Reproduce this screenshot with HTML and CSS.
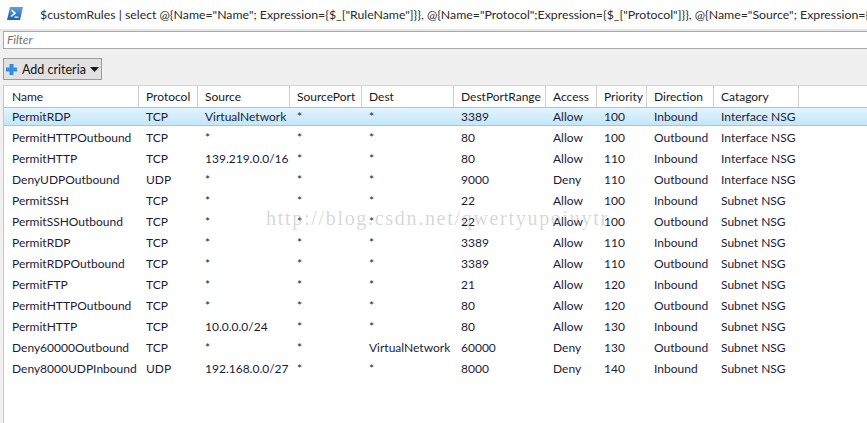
FILE: index.html
```html
<!DOCTYPE html>
<html>
<head>
<meta charset="utf-8">
<link rel="stylesheet" href="styles.css">
</head>
<body>
<div class="window">
  <div class="titlebar">
    <svg class="ps-icon" width="16" height="13" viewBox="0 0 16 13">
      <defs>
        <linearGradient id="psg" x1="0" y1="0" x2="0" y2="1">
          <stop offset="0" stop-color="#5aa3e0"/>
          <stop offset="1" stop-color="#1f5fa8"/>
        </linearGradient>
      </defs>
      <polygon points="3,0 16,0 13,13 0,13" fill="url(#psg)"/>
      <polyline points="4.5,3 8,6.3 4,9.5" fill="none" stroke="#fff" stroke-width="1.6"/>
      <line x1="7.5" y1="10.2" x2="11.5" y2="10.2" stroke="#fff" stroke-width="1.3"/>
    </svg>
    <span class="title">$customRules | select @{Name="Name"; Expression={$_["RuleName"]}}, @{Name="Protocol";Expression={$_["Protocol"]}}, @{Name="Source"; Expression={$_["SourceAddressPrefix"]}}</span>
  </div>
  <div class="filterbar">
    <div class="filter">Filter</div>
  </div>
  <div class="criteria">
    <div class="add-btn">
      <svg class="plus" width="11" height="11" viewBox="0 0 11 11">
        <rect x="3.5" y="0" width="4" height="11" fill="#2f8ee0"/>
        <rect x="0" y="3.5" width="11" height="4" fill="#2f8ee0"/>
      </svg>
      <span class="add-label">Add criteria</span>
      <svg class="caret" width="9" height="5" viewBox="0 0 9 5"><polygon points="0,0 9,0 4.5,5" fill="#1a1a1a"/></svg>
    </div>
  </div>
  <div class="list">
    <div class="row head">
      <div class="c">Name</div><div class="c">Protocol</div><div class="c">Source</div><div class="c">SourcePort</div><div class="c">Dest</div><div class="c">DestPortRange</div><div class="c">Access</div><div class="c">Priority</div><div class="c">Direction</div><div class="c">Catagory</div><div class="c fill"></div>
    </div>
    <div class="row sel">
      <div class="c">PermitRDP</div><div class="c">TCP</div><div class="c">VirtualNetwork</div><div class="c">*</div><div class="c">*</div><div class="c">3389</div><div class="c">Allow</div><div class="c">100</div><div class="c">Inbound</div><div class="c">Interface NSG</div><div class="c"></div>
    </div>
    <div class="row">
      <div class="c">PermitHTTPOutbound</div><div class="c">TCP</div><div class="c">*</div><div class="c">*</div><div class="c">*</div><div class="c">80</div><div class="c">Allow</div><div class="c">100</div><div class="c">Outbound</div><div class="c">Interface NSG</div><div class="c"></div>
    </div>
    <div class="row">
      <div class="c">PermitHTTP</div><div class="c">TCP</div><div class="c">139.219.0.0/16</div><div class="c">*</div><div class="c">*</div><div class="c">80</div><div class="c">Allow</div><div class="c">110</div><div class="c">Inbound</div><div class="c">Interface NSG</div><div class="c"></div>
    </div>
    <div class="row">
      <div class="c">DenyUDPOutbound</div><div class="c">UDP</div><div class="c">*</div><div class="c">*</div><div class="c">*</div><div class="c">9000</div><div class="c">Deny</div><div class="c">110</div><div class="c">Outbound</div><div class="c">Interface NSG</div><div class="c"></div>
    </div>
    <div class="row">
      <div class="c">PermitSSH</div><div class="c">TCP</div><div class="c">*</div><div class="c">*</div><div class="c">*</div><div class="c">22</div><div class="c">Allow</div><div class="c">100</div><div class="c">Inbound</div><div class="c">Subnet NSG</div><div class="c"></div>
    </div>
    <div class="row">
      <div class="c">PermitSSHOutbound</div><div class="c">TCP</div><div class="c">*</div><div class="c">*</div><div class="c">*</div><div class="c">22</div><div class="c">Allow</div><div class="c">100</div><div class="c">Outbound</div><div class="c">Subnet NSG</div><div class="c"></div>
    </div>
    <div class="row">
      <div class="c">PermitRDP</div><div class="c">TCP</div><div class="c">*</div><div class="c">*</div><div class="c">*</div><div class="c">3389</div><div class="c">Allow</div><div class="c">110</div><div class="c">Inbound</div><div class="c">Subnet NSG</div><div class="c"></div>
    </div>
    <div class="row">
      <div class="c">PermitRDPOutbound</div><div class="c">TCP</div><div class="c">*</div><div class="c">*</div><div class="c">*</div><div class="c">3389</div><div class="c">Allow</div><div class="c">110</div><div class="c">Outbound</div><div class="c">Subnet NSG</div><div class="c"></div>
    </div>
    <div class="row">
      <div class="c">PermitFTP</div><div class="c">TCP</div><div class="c">*</div><div class="c">*</div><div class="c">*</div><div class="c">21</div><div class="c">Allow</div><div class="c">120</div><div class="c">Inbound</div><div class="c">Subnet NSG</div><div class="c"></div>
    </div>
    <div class="row">
      <div class="c">PermitHTTPOutbound</div><div class="c">TCP</div><div class="c">*</div><div class="c">*</div><div class="c">*</div><div class="c">80</div><div class="c">Allow</div><div class="c">120</div><div class="c">Outbound</div><div class="c">Subnet NSG</div><div class="c"></div>
    </div>
    <div class="row">
      <div class="c">PermitHTTP</div><div class="c">TCP</div><div class="c">10.0.0.0/24</div><div class="c">*</div><div class="c">*</div><div class="c">80</div><div class="c">Allow</div><div class="c">130</div><div class="c">Inbound</div><div class="c">Subnet NSG</div><div class="c"></div>
    </div>
    <div class="row">
      <div class="c">Deny60000Outbound</div><div class="c">TCP</div><div class="c">*</div><div class="c">*</div><div class="c">VirtualNetwork</div><div class="c">60000</div><div class="c">Deny</div><div class="c">130</div><div class="c">Outbound</div><div class="c">Subnet NSG</div><div class="c"></div>
    </div>
    <div class="row">
      <div class="c">Deny8000UDPInbound</div><div class="c">UDP</div><div class="c">192.168.0.0/27</div><div class="c">*</div><div class="c">*</div><div class="c">8000</div><div class="c">Deny</div><div class="c">140</div><div class="c">Inbound</div><div class="c">Subnet NSG</div><div class="c"></div>
    </div>
  </div>
  <div class="watermark">http://blog.csdn.net/qwertyupoiuytr</div>
</div>
</body>
</html>
```

FILE: styles.css
```css
html, body {
  margin: 0;
  padding: 0;
  background: #ffffff;
  overflow: hidden;
}
.window {
  position: relative;
  width: 867px;
  height: 423px;
  overflow: hidden;
  font-family: Lato, "Open Sans", sans-serif;
  font-size: 12px;
  color: #1c1c36;
  background: #f0f0f0;
  display: flex;
  flex-direction: column;
}
.titlebar {
  height: 29px;
  background: #ffffff;
  display: flex;
  align-items: center;
  padding-left: 7px;
  white-space: nowrap;
  overflow: hidden;
  flex-shrink: 0;
}
.ps-icon {
  flex-shrink: 0;
  margin-top: -2px;
}
.title {
  margin-left: 17px;
  color: #2a2a2a;
  font-size: 12.3px;
}
.filterbar {
  border-top: 2px solid #e4e4e4;
  padding-left: 3px;
  flex-shrink: 0;
}
.filter {
  height: 16px;
  line-height: 16px;
  background: #ffffff;
  border: 1px solid #a9a9a9;
  border-right: none;
  padding-left: 3px;
  font-style: italic;
  color: #707070;
}
.criteria {
  padding: 9px 0 5px 3px;
  flex-shrink: 0;
}
.add-btn {
  width: 95px;
  height: 20px;
  border: 1px solid #9a9a9a;
  background: #e1e1e1;
  display: flex;
  align-items: center;
  padding-left: 2px;
  box-sizing: content-box;
}
.plus {
  margin-right: 5px;
}
.add-label {
  color: #111111;
  font-size: 12.5px;
}
.caret {
  margin-left: 4px;
}
.list {
  flex: 1;
  margin-left: 3px;
  background: #ffffff;
  border-left: 1px solid #a8cdee;
  border-top: 1px solid #c7d7e6;
}
.row {
  display: grid;
  grid-template-columns: 135px 59px 92px 72px 92px 92px 51px 50px 67px 85px 1fr;
  height: 21px;
  line-height: 19px;
  box-sizing: border-box;
  white-space: nowrap;
}
.row .c {
  padding-left: 8px;
  overflow: hidden;
}
.row .c + .c {
  padding-left: 7px;
}
.head {
  height: 21px;
  line-height: 21px;
  color: #1a1a1a;
}
.head .c {
  border-right: 1px solid #d0d0d0;
}
.head .c.fill {
  border-right: none;
}
.sel {
  height: 19px;
  line-height: 17px;
  margin-bottom: 2px;
  border-top: 1px solid #8fcdee;
  border-bottom: 1px solid #8fcdee;
  background: linear-gradient(#e2f4fd, #c3e6f9);
}
.watermark {
  position: absolute;
  left: 266px;
  top: 207px;
  font-family: "Liberation Serif", serif;
  font-size: 20px;
  letter-spacing: 1.7px;
  color: rgba(150, 150, 150, 0.38);
  white-space: nowrap;
  pointer-events: none;
}
```
